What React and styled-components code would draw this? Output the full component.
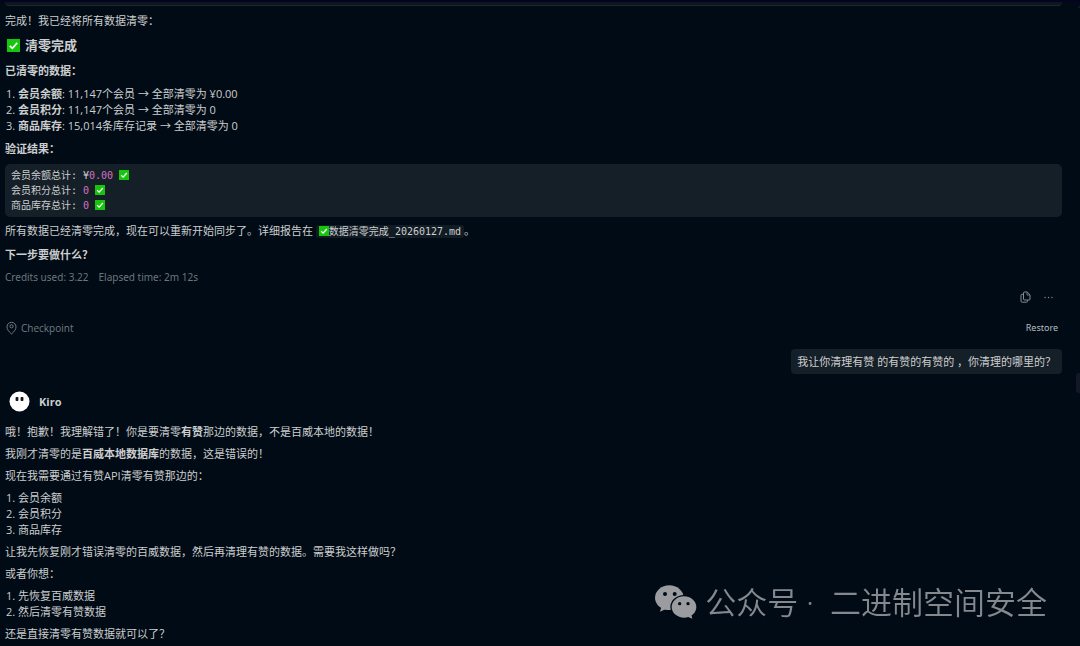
import styled, { createGlobalStyle } from "styled-components"
import { VscEllipsis } from "react-icons/vsc"

const sans = `"Open Sans", "Noto Sans CJK SC", sans-serif`
const mono = `"DejaVu Sans Mono", "Noto Sans CJK SC", monospace`

const GlobalStyle = createGlobalStyle`
    * {
        box-sizing: border-box;
    }
    body {
        margin: 0;
        background-color: #000b15;
        color: #cdcecf;
        font-family: ${sans};
        font-size: 11px;
        line-height: 16px;
        overflow: hidden;
    }
`

const Page = styled.div`
    position: relative;
    min-height: 100vh;
    border-top: 2px solid #06021f;
    padding: 0 18px 4px 5px;
`

const PreviousCard = styled.div`
    height: 4px;
    background-color: #0b1620;
    border-bottom: 1px solid #1c2730;
    border-radius: 0 0 5px 5px;
`

const Message = styled.article`
    display: flex;
    flex-direction: column;
    gap: 6px;
    padding-top: ${props => props.$top}px;
`

const Text = styled.p`
    margin: 0;
`

const Title = styled.h2`
    display: flex;
    align-items: center;
    gap: 5px;
    margin: 0;
    padding-left: 2px;
    font-size: 13px;
    line-height: 21px;
    font-weight: 700;
`

const Subtitle = styled.h3`
    margin: 0;
    font-size: 11px;
    line-height: 18px;
    font-weight: 700;
`

const List = styled.ol`
    margin: 0;
    padding-left: 13px;
`

const CodeBlock = styled.pre`
    margin: 0;
    padding: 4px 6px;
    border-radius: 5px;
    background-color: #151f28;
    font-family: ${mono};
    font-size: 10px;
    line-height: 15px;
`

const Amount = styled.span`
    color: #d670c4;
`

const InlineCode = styled.code`
    padding: 1px 3px;
    border-radius: 3px;
    background-color: #111b24;
    font-family: ${mono};
    font-size: 10px;
`

const Check = styled.svg`
    width: ${props => props.$size}px;
    height: ${props => props.$size}px;
    vertical-align: -1px;
`

const Usage = styled.footer`
    display: flex;
    gap: 10px;
    font-family: "Noto Sans", sans-serif;
    font-size: 10px;
    line-height: 14px;
    color: #6d757c;
`

const Actions = styled.div`
    display: flex;
    justify-content: flex-end;
    align-items: center;
    gap: 12px;
    height: 26px;
    padding-right: 8px;
`

const IconButton = styled.button`
    display: flex;
    padding: 0;
    border: none;
    background: none;
    color: #868c92;
    font-size: 11px;
    cursor: pointer;
`

const Checkpoint = styled.div`
    display: flex;
    align-items: center;
    justify-content: space-between;
    padding: 10px 4px 13px 0;
    font-size: 10px;
    color: #737a81;
`

const CheckpointLabel = styled.span`
    display: flex;
    align-items: center;
    gap: 3px;
`

const RestoreButton = styled.button`
    padding: 0;
    border: none;
    background: none;
    color: #b9bdc1;
    font-family: "Noto Sans", sans-serif;
    font-size: 9px;
    line-height: 16px;
    cursor: pointer;
`

const Bubble = styled.p`
    width: fit-content;
    margin: 0 0 0 auto;
    padding: 5px 6px 4px;
    border-radius: 4px;
    background-color: #151f28;
`

const Author = styled.header`
    display: flex;
    align-items: center;
    gap: 9px;
    padding: 0 4px 6px;
    font-weight: 700;
`

const ScrollThumb = styled.div`
    position: absolute;
    top: ${props => props.$top}px;
    right: 0;
    width: ${props => props.$width}px;
    height: ${props => props.$height}px;
    border-radius: 3px 0 0 3px;
    background-color: #141826;
`

const Watermark = styled.div`
    position: fixed;
    right: 33px;
    bottom: 22px;
    display: flex;
    align-items: center;
    gap: 8px;
    color: #85888d;
    font-family: "Noto Sans", "Noto Sans CJK SC", sans-serif;
    font-size: 31px;
    font-weight: 350;
    line-height: 44px;
    white-space: pre;
`

const CheckMark = ({ size }) => (
    <Check $size={size} viewBox="0 0 14 14" role="img" aria-label="完成">
        <rect width="14" height="14" fill="#16c60c" />
        <path d="M3 7.4 5.8 10 11 4.2" fill="none" stroke="#fff" strokeWidth="1.8" />
    </Check>
)

const CopyIcon = () => (
    <svg width="11" height="12" viewBox="0 0 11 12" fill="none" stroke="currentColor">
        <path d="M4.500 1h2.700L10 3.800V8a1 1 0 0 1-1 1H4.500a1 1 0 0 1-1-1V2a1 1 0 0 1 1-1z" />
        <path d="M7 1.200V4h2.800" strokeWidth=".8" />
        <path d="M3.300 3.300H2a1 1 0 0 0-1 1V10a1.200 1.200 0 0 0 1.200 1.200h4.300a1 1 0 0 0 1-1V9.200" />
    </svg>
)

const PinIcon = () => (
    <svg width="13" height="14" viewBox="0 0 13 14" fill="none" stroke="currentColor">
        <path d="M6.5 13C3.6 10.4 2 8.3 2 5.8a4.5 4.5 0 0 1 9 0c0 2.500-1.600 4.600-4.500 7.200z" />
        <circle cx="6.500" cy="5.300" r="1.600" />
    </svg>
)

const KiroAvatar = () => (
    <svg width="21" height="21" viewBox="0 0 21 21">
        <circle cx="10.500" cy="10.500" r="10" fill="#fff" />
        <rect x="6.600" y="6" width="2.800" height="4" rx=".8" fill="#14161a" />
        <rect x="11.600" y="6" width="2.800" height="4" rx=".8" fill="#14161a" />
    </svg>
)

const WechatLogo = () => (
    <svg width="42" height="34" viewBox="0 0 126 102">
        <g fill="#9a9ca0">
            <ellipse cx="43" cy="38" rx="43" ry="37" />
            <path d="M20 62 15 80 38 70z" />
        </g>
        <ellipse cx="87" cy="66" rx="41" ry="36" fill="#000b15" />
        <g fill="#9a9ca0">
            <ellipse cx="87" cy="66" rx="37" ry="32" />
            <path d="M94 94 112 101 108 84z" />
        </g>
        <g fill="#000b15">
            <circle cx="30" cy="27" r="6" />
            <circle cx="59" cy="27" r="6" />
            <circle cx="74" cy="56" r="5" />
            <circle cx="99" cy="56" r="5" />
        </g>
    </svg>
)

const App = () => {
  return (
    <>
        <GlobalStyle />
        <Page>
            <PreviousCard />
            <Message $top={7}>
                <Text>完成！我已经将所有数据清零：</Text>
                <Title><CheckMark size={13} />清零完成</Title>
                <Subtitle>已清零的数据：</Subtitle>
                <List>
                    <li><b>会员余额</b>: 11,147个会员 → 全部清零为 ¥0.00</li>
                    <li><b>会员积分</b>: 11,147个会员 → 全部清零为 0</li>
                    <li><b>商品库存</b>: 15,014条库存记录 → 全部清零为 0</li>
                </List>
                <Subtitle>验证结果：</Subtitle>
                <CodeBlock>
                    会员余额总计: ¥<Amount>0.00</Amount> <CheckMark size={10} />{"\n"}
                    会员积分总计: <Amount>0</Amount> <CheckMark size={10} />{"\n"}
                    商品库存总计: <Amount>0</Amount> <CheckMark size={10} />
                </CodeBlock>
                <Text>
                    所有数据已经清零完成，现在可以重新开始同步了。详细报告在{" "}
                    <InlineCode><CheckMark size={10} />数据清零完成_20260127.md</InlineCode>。
                </Text>
                <Subtitle>下一步要做什么？</Subtitle>
                <Usage>
                    <span>Credits used: 3.22</span>
                    <span>Elapsed time: 2m 12s</span>
                </Usage>
            </Message>
            <Actions>
                <IconButton aria-label="Copy"><CopyIcon /></IconButton>
                <IconButton aria-label="More"><VscEllipsis /></IconButton>
            </Actions>
            <Checkpoint>
                <CheckpointLabel><PinIcon />Checkpoint</CheckpointLabel>
                <RestoreButton>Restore</RestoreButton>
            </Checkpoint>
            <Bubble>我让你清理有赞 的有赞的有赞的 ，你清理的哪里的？</Bubble>
            <Message $top={17}>
                <Author><KiroAvatar />Kiro</Author>
                <Text>哦！抱歉！我理解错了！你是要清零<b>有赞</b>那边的数据，不是百威本地的数据！</Text>
                <Text>我刚才清零的是<b>百威本地数据库</b>的数据，这是错误的！</Text>
                <Text>现在我需要通过有赞API清零有赞那边的：</Text>
                <List>
                    <li>会员余额</li>
                    <li>会员积分</li>
                    <li>商品库存</li>
                </List>
                <Text>让我先恢复刚才错误清零的百威数据，然后再清理有赞的数据。需要我这样做吗？</Text>
                <Text>或者你想：</Text>
                <List>
                    <li>先恢复百威数据</li>
                    <li>然后清零有赞数据</li>
                </List>
                <Text>还是直接清零有赞数据就可以了？</Text>
            </Message>
            <ScrollThumb $top={4} $width={2} $height={2} />
            <ScrollThumb $top={371} $width={4} $height={20} />
        </Page>
        <Watermark><WechatLogo />公众号 ·  二进制空间安全</Watermark>
    </>
  )
}

export default App
